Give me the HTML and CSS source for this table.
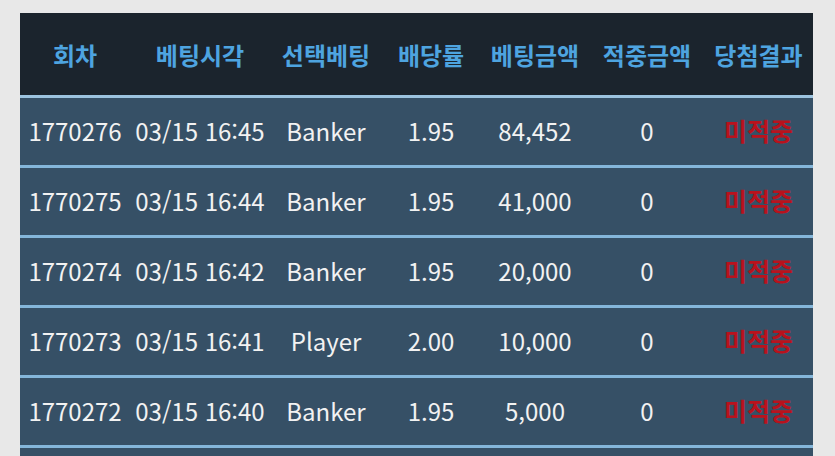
FILE: index.html
```html
<!DOCTYPE html>
<html lang="ko">
<head>
<meta charset="utf-8">
<link rel="stylesheet" href="styles.css">
</head>
<body>
<div class="wrap">
<table class="bets">
  <colgroup>
    <col class="c1"><col class="c2"><col class="c3"><col class="c4"><col class="c5"><col class="c6"><col class="c7">
  </colgroup>
  <thead>
    <tr><th>회차</th><th>베팅시각</th><th>선택베팅</th><th>배당률</th><th>베팅금액</th><th>적중금액</th><th>당첨결과</th></tr>
  </thead>
  <tbody>
    <tr><td>1770276</td><td>03/15 16:45</td><td>Banker</td><td>1.95</td><td>84,452</td><td>0</td><td class="lose">미적중</td></tr>
    <tr><td>1770275</td><td>03/15 16:44</td><td>Banker</td><td>1.95</td><td>41,000</td><td>0</td><td class="lose">미적중</td></tr>
    <tr><td>1770274</td><td>03/15 16:42</td><td>Banker</td><td>1.95</td><td>20,000</td><td>0</td><td class="lose">미적중</td></tr>
    <tr><td>1770273</td><td>03/15 16:41</td><td>Player</td><td>2.00</td><td>10,000</td><td>0</td><td class="lose">미적중</td></tr>
    <tr><td>1770272</td><td>03/15 16:40</td><td>Banker</td><td>1.95</td><td>5,000</td><td>0</td><td class="lose">미적중</td></tr>
    <tr class="more"><td></td><td></td><td></td><td></td><td></td><td></td><td></td></tr>
  </tbody>
</table>
</div>
</body>
</html>
```

FILE: styles.css
```css
html, body {
  margin: 0;
  padding: 0;
  background: #e8e8e8;
  overflow: hidden;
}
.wrap {
  padding: 13px 22px 0 20px;
}
.bets {
  width: 793px;
  border-collapse: collapse;
  table-layout: fixed;
  font-family: "Noto Sans CJK KR", "Noto Sans", sans-serif;
}
.c1 { width: 110px; }
.c2 { width: 140px; }
.c3 { width: 112px; }
.c4 { width: 98px; }
.c5 { width: 110px; }
.c6 { width: 114px; }
.c7 { width: 109px; }
.bets th {
  background: #1b242d;
  color: #4ea4e0;
  font-size: 24px;
  font-weight: 700;
  height: 82px;
  padding: 0;
  text-align: center;
  white-space: nowrap;
  border-bottom: 3px solid #9cc3df;
}
.bets td {
  background: #365066;
  color: #f2f2f2;
  font-size: 24px;
  font-weight: 400;
  height: 64px;
  padding: 0 0 3px;
  text-align: center;
  white-space: nowrap;
  border-top: 3px solid #84b6da;
}
.bets thead + tbody tr:first-child td {
  border-top: none;
}
.bets td.lose {
  color: #b9121d;
  font-size: 25px;
  font-weight: 700;
}
```
